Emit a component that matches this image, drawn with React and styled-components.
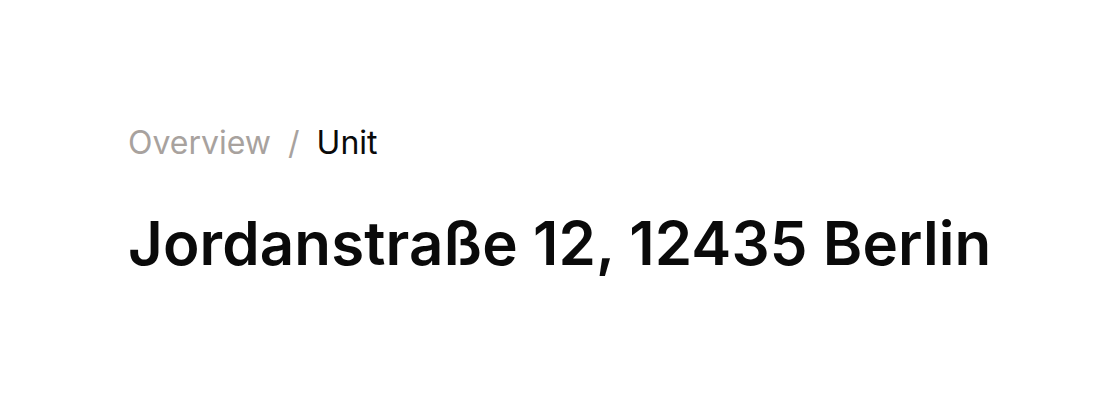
import styled, { createGlobalStyle } from 'styled-components';

const GlobalStyle = createGlobalStyle`
  html, body {
    margin: 0;
    padding: 0;
    background: #fff;
  }
  body {
    font-family: Inter, "Noto Sans", sans-serif;
    -webkit-font-smoothing: antialiased;
  }
`;

const Page = styled.div`
  width: 1117px;
  height: 404px;
  box-sizing: border-box;
  padding: 123px 64px 0 128px;
  display: flex;
  flex-direction: column;
  gap: 44px;
`;

const Breadcrumbs = styled.nav`
  display: flex;
  align-items: center;
  gap: 17px;
  font-size: 32px;
  line-height: 40px;
  font-weight: 400;
`;

const Crumb = styled.span`
  color: ${props => (props.current ? '#0a0a0a' : '#a8a29e')};
`;

const Separator = styled.span`
  color: #a8a29e;
`;

const Title = styled.h1`
  margin: 0;
  font-size: 60px;
  line-height: 72px;
  font-weight: 600;
  letter-spacing: 0.002em;
  white-space: nowrap;
  color: #0a0a0a;
`;

const App = () => {
  return (
    <Page>
      <GlobalStyle />
      <Breadcrumbs>
        <Crumb>Overview</Crumb>
        <Separator>/</Separator>
        <Crumb current>Unit</Crumb>
      </Breadcrumbs>
      <Title>Jordanstraße 12, 12435 Berlin</Title>
    </Page>
  );
};

export default App;
